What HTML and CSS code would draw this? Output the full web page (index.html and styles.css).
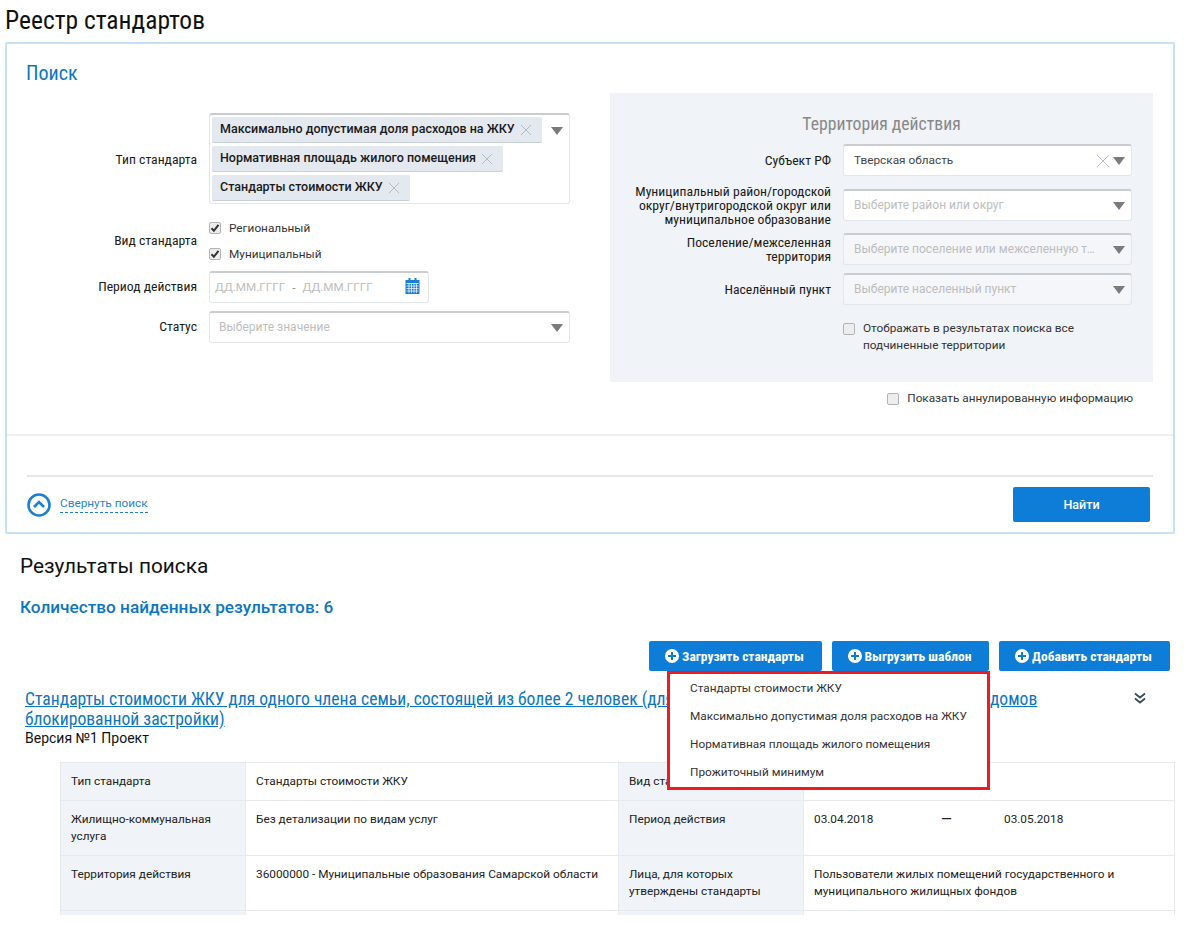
FILE: index.html
```html
<!DOCTYPE html>
<html lang="ru">
<head>
<meta charset="utf-8">
<title>Реестр стандартов</title>
<link rel="stylesheet" href="styles.css">
</head>
<body>
<h1 class="page-title">Реестр стандартов</h1>
<section class="search">
  <h2 class="search-title">Поиск</h2>
  <div class="form">
    <div class="col-left">
      <div class="row row-type">
        <div class="label">Тип стандарта</div>
        <div class="control multi">
          <div class="tags">
            <span class="tag"><b>Максимально допустимая доля расходов на ЖКУ</b><svg class="x" viewBox="0 0 12 12"><path d="M1 1l10 10M11 1L1 11"/></svg></span>
            <span class="tag"><b>Нормативная площадь жилого помещения</b><svg class="x" viewBox="0 0 12 12"><path d="M1 1l10 10M11 1L1 11"/></svg></span>
            <span class="tag"><b>Стандарты стоимости ЖКУ</b><svg class="x" viewBox="0 0 12 12"><path d="M1 1l10 10M11 1L1 11"/></svg></span>
          </div>
          <span class="arrow"></span>
        </div>
      </div>
      <div class="row row-kind">
        <div class="label">Вид стандарта</div>
        <div class="checks">
          <label class="check"><span class="box on"><svg viewBox="0 0 10 10"><path d="M1.5 5.2l2.4 2.6 4.6-6"/></svg></span>Региональный</label>
          <label class="check"><span class="box on"><svg viewBox="0 0 10 10"><path d="M1.5 5.2l2.4 2.6 4.6-6"/></svg></span>Муниципальный</label>
        </div>
      </div>
      <div class="row row-period">
        <div class="label">Период действия</div>
        <div class="control period">
          <span class="ph">ДД.ММ.ГГГГ</span><span class="dash">-</span><span class="ph">ДД.ММ.ГГГГ</span>
          <svg class="cal" viewBox="0 0 14 16"><path fill="#1a7fd6" d="M0 2h3V0h2v2h4V0h2v2h3v14H0z"/><path fill="#fff" d="M1 5h12v.8H1z"/><path stroke="#fff" stroke-width=".7" fill="none" d="M1 8h12M1 10.5h12M1 13h12M3.5 6v9M6 6v9M8.5 6v9M11 6v9"/></svg>
        </div>
      </div>
      <div class="row row-status">
        <div class="label">Статус</div>
        <div class="control single"><span class="ph">Выберите значение</span><span class="arrow"></span></div>
      </div>
    </div>
    <div class="territory">
      <h3 class="territory-title">Территория действия</h3>
      <div class="t-row t-subject">
        <div class="t-label">Субъект РФ</div>
        <div class="control tsel"><span class="val">Тверская область</span><svg class="x x-big" viewBox="0 0 14 14"><path d="M1 1l12 12M13 1L1 13"/></svg><span class="arrow"></span></div>
      </div>
      <div class="t-row t-mun">
        <div class="t-label">Муниципальный район/городской округ/внутригородской округ или муниципальное образование</div>
        <div class="control tsel"><span class="ph">Выберите район или округ</span><span class="arrow"></span></div>
      </div>
      <div class="t-row t-set">
        <div class="t-label">Поселение/межселенная территория</div>
        <div class="control tsel off"><span class="ph trunc">Выберите поселение или межселенную территорию</span><span class="arrow"></span></div>
      </div>
      <div class="t-row t-city">
        <div class="t-label">Населённый пункт</div>
        <div class="control tsel off"><span class="ph">Выберите населенный пункт</span><span class="arrow"></span></div>
      </div>
      <label class="check t-check"><span class="box"></span><span>Отображать в результатах поиска все подчиненные территории</span></label>
    </div>
  </div>
  <div class="annul"><label class="check"><span class="box"></span>Показать аннулированную информацию</label></div>
  <div class="foot">
    <a class="collapse"><svg class="collapse-ic" viewBox="0 0 24 24"><circle cx="12" cy="12" r="10.5"/><path d="M7 14l5-5 5 5"/></svg><span>Свернуть поиск</span></a>
    <button class="find">Найти</button>
  </div>
</section>
<h2 class="res-title">Результаты поиска</h2>
<div class="res-count">Количество найденных результатов: 6</div>
<div class="actions">
  <button class="act act-1"><svg class="plus" viewBox="0 0 14 14"><circle cx="7" cy="7" r="7"/><path d="M7 3v8M3 7h8"/></svg>Загрузить стандарты</button>
  <button class="act act-2"><svg class="plus" viewBox="0 0 14 14"><circle cx="7" cy="7" r="7"/><path d="M7 3v8M3 7h8"/></svg>Выгрузить шаблон</button>
  <button class="act act-3"><svg class="plus" viewBox="0 0 14 14"><circle cx="7" cy="7" r="7"/><path d="M7 3v8M3 7h8"/></svg>Добавить стандарты</button>
  <ul class="menu">
    <li>Стандарты стоимости ЖКУ</li>
    <li>Максимально допустимая доля расходов на ЖКУ</li>
    <li>Нормативная площадь жилого помещения</li>
    <li>Прожиточный минимум</li>
  </ul>
</div>
<article class="item">
  <div class="item-head">
    <a class="item-link">Стандарты стоимости ЖКУ для одного члена семьи, состоящей из более 2 человек (для многоквартирных домов, жилых домов, и домов блокированной застройки)</a>
    <svg class="chev" viewBox="0 0 12 12"><path d="M1 1.5l5 4 5-4M1 6.5l5 4 5-4"/></svg>
  </div>
  <div class="version">Версия №1 Проект</div>
  <div class="table-wrap">
    <table class="info">
      <colgroup><col class="c1"><col class="c2"><col class="c3"><col class="c4"></colgroup>
      <tr class="r1"><th>Тип стандарта</th><td>Стандарты стоимости ЖКУ</td><th>Вид стандарта</th><td>Региональный</td></tr>
      <tr class="r2"><th>Жилищно-коммунальная услуга</th><td>Без детализации по видам услуг</td><th>Период действия</th><td><div class="dates"><span>03.04.2018</span><span class="em">—</span><span>03.05.2018</span></div></td></tr>
      <tr class="r2"><th>Территория действия</th><td>36000000 - Муниципальные образования Самарской области</td><th>Лица, для которых утверждены стандарты</th><td>Пользователи жилых помещений государственного и муниципального жилищных фондов</td></tr>
      <tr class="r2"><th></th><td></td><th></th><td></td></tr>
    </table>
  </div>
</article>
</body>
</html>
```
FILE: styles.css
```css
* { box-sizing: border-box; }
html, body { margin: 0; padding: 0; height: 932px; overflow: hidden; background: #fff; }
body { font-family: Roboto, "Noto Sans", sans-serif; font-size: 11.8px; color: #1a1a1a; }
h1, h2, h3, ul { margin: 0; padding: 0; font-weight: 400; }

.page-title { font-family: "Roboto Condensed", "Liberation Sans Narrow", Roboto, sans-serif; font-stretch: condensed; font-size: 25.5px; line-height: 30px; height: 42px; padding: 5px 0 0 5px; color: #111; }

.search { margin-left: 5px; width: 1170px; height: 492px; border: 2px solid #c5e0f7; border-radius: 2px; padding: 0 20px; }
.search-title { font-family: "Roboto Condensed", "Liberation Sans Narrow", Roboto, sans-serif; font-stretch: condensed; font-size: 20px; line-height: 24px; padding-top: 17px; height: 49px; margin-left: -1px; color: #0b76c0; }

.form { display: flex; gap: 40px; }
.col-left { width: 543px; padding-top: 20px; }
.row { display: flex; align-items: center; }
.label { width: 170px; margin-right: 12px; text-align: right; font-family: "Roboto Condensed", "Liberation Sans Narrow", Roboto, sans-serif; font-stretch: condensed; font-size: 13.7px; color: #1a1a1a; flex: none; }
.control { display: flex; align-items: center; position: relative; background: #fff; border: 1px solid #e3e7ec; border-top: 2px solid #c9ccd0; border-radius: 3px; }
.ph { color: #bdbdbd; font-size: 12px; padding-bottom: 1px; }
.arrow { width: 0; height: 0; border-left: 6.5px solid transparent; border-right: 6.5px solid transparent; border-top: 8px solid #7b7b7b; flex: none; }

.row-type { height: 91px; }
.multi { width: 361px; height: 91px; padding: 2px 6px 0 2px; align-items: flex-start; justify-content: space-between; }
.tags { display: flex; flex-direction: column; align-items: flex-start; gap: 3px; }
.tag { display: flex; align-items: center; height: 26px; padding: 0 10px 0 8px; background: #e4e9f0; border-bottom: 1px solid #c9cfd8; border-radius: 2px; font-size: 12.5px; }
.tag b { font-weight: 500; padding-bottom: 2px; }
.x { fill: none; stroke: #b7bcc2; stroke-width: 1; flex: none; }
.tag .x { width: 12px; height: 12px; margin-left: 5px; }
.multi .arrow { margin-top: 10px; }

.row-kind { height: 52px; margin-top: 11px; }
.row-kind .label, .row-period .label, .row-status .label { margin-bottom: 2px; }
.checks { display: flex; flex-direction: column; gap: 9px; }
.check { display: flex; align-items: center; color: #333; font-size: 11.8px; line-height: 17px; }
.box { width: 12px; height: 12px; border: 1px solid #b3b3b3; border-radius: 2px; background: #ededed; margin-right: 8px; flex: none; display: block; }
.box svg { display: block; width: 10px; height: 10px; fill: none; stroke: #333; stroke-width: 2; }

.row-period { margin-top: 4px; height: 32px; }
.period { width: 220px; height: 32px; padding: 0 8px 0 5px; }
.period .ph { font-size: 11.7px; }
.dash { margin: 0 7px; color: #888; }
.cal { width: 15px; height: 16px; margin: 0 0 3px auto; }
.row-status { margin-top: 8px; height: 32px; }
.single { width: 361px; height: 32px; padding: 0 6px 0 9px; justify-content: space-between; }

.territory { width: 543px; height: 289px; background: #f0f3f7; padding: 20px 21px 0 0; margin-top: 0; }
.territory-title { font-family: "Roboto Condensed", "Liberation Sans Narrow", Roboto, sans-serif; font-stretch: condensed; font-size: 17.7px; line-height: 22px; color: #888; text-align: center; padding-left: 0; height: 31px; width: 543px; }
.t-row { display: flex; align-items: center; }
.t-label { width: 221px; padding-left: 20px; margin-right: 12px; text-align: right; font-family: "Roboto Condensed", "Liberation Sans Narrow", Roboto, sans-serif; font-stretch: condensed; font-size: 13.7px; line-height: 14px; color: #1a1a1a; flex: none; }
.tsel { width: 289px; height: 32px; padding: 0 6px 0 10px; }
.tsel .arrow { margin-left: auto; }
.tsel.off { background: #f4f6f9; }
.val { color: #444; padding-bottom: 1px; }
.x-big { width: 14px; height: 14px; margin-left: auto; margin-right: 3px; }
.x-big + .arrow { margin-left: 0; }
.trunc { white-space: nowrap; overflow: hidden; text-overflow: ellipsis; width: 245px; }
.t-mun { margin-top: 8px; }
.t-set { margin-top: 7px; }
.t-city { margin-top: 8px; }
.t-check { margin: 15px 0 0 233px; width: 250px; align-items: flex-start; }
.t-check .box { margin-top: 3px; }

.annul { display: flex; justify-content: flex-end; align-items: flex-start; padding: 8px 40px 0 0; height: 54px; border-bottom: 2px solid #eef0f2; margin: 0 -20px; }
.annul .check { font-size: 11.75px; }
.foot { margin-top: 39px; border-top: 2px solid #e8e8e8; display: flex; justify-content: space-between; padding: 10px 3px 0 0; }
.collapse { display: flex; align-items: center; color: #2a83d4; font-size: 11.8px; }
.collapse-ic { width: 24px; height: 24px; margin-right: 9px; fill: none; stroke: #1a7fd6; stroke-width: 2.6; }
.collapse span { border-bottom: 1px dashed #1a7fd6; line-height: 14px; padding-bottom: 2px; }
.find { width: 137px; height: 35px; background: #0d7dd8; color: #fff; border: 0; border-radius: 2px; font: 500 12.5px Roboto, sans-serif; }

.res-title { font-size: 20.8px; line-height: 28px; margin: 18px 0 0 20px; color: #111; }
.res-count { font-size: 17.2px; font-weight: 500; line-height: 24px; margin: 15px 0 0 20px; color: #0b76c0; }

.actions { position: relative; display: flex; justify-content: flex-end; gap: 10px; padding-right: 14px; margin-top: 22px; height: 30px; }
.act { height: 30px; display: flex; align-items: center; justify-content: center; background: #0d7dd8; color: #fff; border: 0; border-radius: 2px; font-family: "Roboto Condensed", "Liberation Sans Narrow", Roboto, sans-serif; font-stretch: condensed; font-weight: 700; font-size: 13.5px; padding: 0 2px 0 0; }
.act-1 { width: 173px; }
.act-2 { width: 157px; }
.act-3 { width: 171px; }
.plus { width: 14px; height: 14px; margin-right: 3px; }
.plus circle { fill: #fff; }
.plus path { stroke: #0d7dd8; stroke-width: 2; }
.menu { position: absolute; left: 667px; top: 30px; width: 323px; height: 119px; background: #fff; border: 3px solid #ed1c24; list-style: none; padding: 0 0 0 20px; z-index: 2; }
.menu li { height: 28px; line-height: 28px; color: #333; font-size: 11.8px; white-space: nowrap; }

.item { padding: 0 0 0 25px; }
.item-head { display: flex; width: 1121px; margin-top: 18px; justify-content: space-between; }
.item-link { font-family: "Roboto Condensed", "Liberation Sans Narrow", Roboto, sans-serif; font-stretch: condensed; font-size: 17.6px; line-height: 20px; color: #0b76c0; text-decoration: underline; width: 1040px; }
.chev { width: 12px; height: 12px; margin-top: 3px; fill: none; stroke: #3a4a5a; stroke-width: 1.8; flex: none; }
.version { font-size: 14px; line-height: 18px; color: #111; }
.table-wrap { margin: 15px 0 0 35px; height: 153px; width: 1115px; overflow: hidden; }
.info { border-collapse: collapse; table-layout: fixed; width: 1114px; }
.c1, .c3 { width: 185px; }
.c2 { width: 373px; }
.c4 { width: 371px; }
.info th, .info td { border: 1px solid #e6eaef; padding: 10px 10px; vertical-align: top; text-align: left; font-weight: 400; font-size: 11.8px; line-height: 17px; color: #222; }
.info th { background: #f0f3f7; }
.r1 { height: 38px; }
.r2 { height: 55px; }
.dates { display: flex; }
.dates span { width: 60px; }
.dates .em { width: 130px; padding-left: 67px; font-size: 14px; line-height: 17px; }
```
